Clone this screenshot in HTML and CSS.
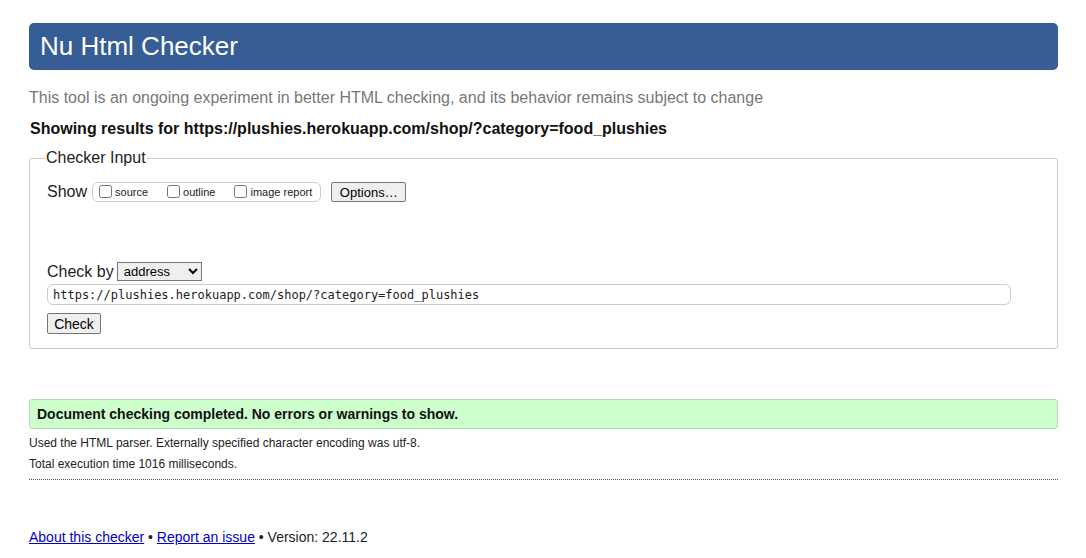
FILE: index.html
```html
<!DOCTYPE html>
<html>
<head>
<meta charset="utf-8">
<title>Nu Html Checker</title>
<link rel="stylesheet" href="styles.css">
</head>
<body>
<h1 class="title">Nu Html Checker</h1>
<p class="intro">This tool is an ongoing experiment in better HTML checking, and its behavior remains subject to change</p>
<p class="results-for">Showing results for https://plushies.herokuapp.com/shop/?category=food_plushies</p>
<form class="checker">
  <fieldset class="fs">
    <legend class="legend">Checker Input</legend>
    <div class="show-row">
      <span class="lbl">Show</span>
      <span class="show-group">
        <label class="opt"><input type="checkbox" class="cb">source</label>
        <label class="opt"><input type="checkbox" class="cb">outline</label>
        <label class="opt"><input type="checkbox" class="cb">image report</label>
      </span>
      <button type="button" class="btn opts">Options…</button>
    </div>
    <div class="check-row">
      <span class="lbl">Check by</span>
      <select class="sel"><option>address</option></select>
    </div>
    <input class="url" type="text" value="https://plushies.herokuapp.com/shop/?category=food_plushies">
    <div class="submit-row"><button type="button" class="btn check">Check</button></div>
  </fieldset>
</form>
<div class="success">Document checking completed. No errors or warnings to show.</div>
<p class="details">Used the HTML parser. Externally specified character encoding was utf-8.</p>
<p class="details">Total execution time 1016 milliseconds.</p>
<hr class="sep">
<p class="footer"><a href="#">About this checker</a> • <a href="#">Report an issue</a> • Version: 22.11.2</p>
</body>
</html>
```
FILE: styles.css
```css
html, body { margin: 0; padding: 0; background: #fff; }
body {
  padding: 23px 28px 0 29px;
  font-family: "Liberation Sans", Arial, sans-serif;
  color: #222;
}
.title {
  margin: 0;
  height: 47px;
  background: #365d95;
  color: #fff;
  border-radius: 5px;
  font-weight: normal;
  font-size: 26px;
  line-height: 47px;
  padding-left: 11px;
}
.intro {
  margin: 17px 0 0 0;
  font-size: 16px;
  color: #777;
  line-height: 22px;
}
.results-for {
  margin: 10px 0 0 1px;
  font-size: 16px;
  font-weight: bold;
  color: #111;
  line-height: 20px;
}
.checker { margin: 10px 0 0 0; }
.fs {
  margin: 0;
  border: 1px solid #ccc;
  border-radius: 3px;
  padding: 13px 17px 13px 17px;
  height: 200px;
  box-sizing: border-box;
}
.legend {
  padding: 0 1px;
  margin-left: -2px;
  font-size: 16px;
  color: #222;
}
.show-row {
  display: flex;
  align-items: center;
  margin-top: 2px;
}
.lbl { font-size: 16px; color: #222; }
.show-group {
  display: inline-flex;
  align-items: center;
  border: 1px solid #ccc;
  border-radius: 6px;
  margin-left: 5px;
  height: 18px;
  padding: 0 8px 0 6px;
  font-size: 11px;
}
.opt { display: inline-flex; align-items: center; margin-right: 19px; }
.opt:last-child { margin-right: 0; }
.cb { margin: 0 3px 0 0; width: 13px; height: 13px; position: relative; top: -1px; }
.btn {
  font-family: "Liberation Sans", Arial, sans-serif;
  font-size: 13px;
  background: #efefef;
  border: 1px solid #767676;
  border-radius: 2px;
  color: #000;
  padding: 1px 6px;
}
.opts { margin-left: 10px; height: 20px; width: 75px; }
.check-row {
  display: flex;
  align-items: center;
  margin-top: 60px;
}
.sel {
  margin-left: 3px;
  width: 85px;
  height: 19px;
  font-size: 13px;
  font-family: "Liberation Sans", Arial, sans-serif;
  border: 1px solid #767676;
  border-radius: 0;
  padding: 0 0 0 2px;
}
.url {
  display: block;
  margin-top: 3px;
  width: 964px;
  height: 21px;
  box-sizing: border-box;
  border: 1px solid #ccc;
  border-radius: 6px;
  padding: 0 5px;
  font-family: "DejaVu Sans Mono", "Liberation Mono", monospace;
  font-size: 12px;
  color: #222;
}
.submit-row { margin-top: 8px; }
.check { height: 21px; width: 54px; font-size: 14px; }
.success {
  margin-top: 50px;
  background: #ccffcc;
  border: 1px solid #b5dcb5;
  border-radius: 3px;
  height: 30px;
  box-sizing: border-box;
  line-height: 28px;
  padding-left: 7px;
  font-size: 14px;
  font-weight: bold;
  color: #111;
}
.details {
  margin: 0;
  font-size: 12px;
  color: #222;
  line-height: 21px;
}
.success + .details { margin-top: 4px; }
.sep {
  margin: 4px 0 0 0;
  border: 0;
  border-top: 1px dotted #555;
  height: 0;
}
.footer {
  margin: 49px 0 0 0;
  font-size: 14px;
  color: #222;
}
.footer a { color: #00c; }
```
